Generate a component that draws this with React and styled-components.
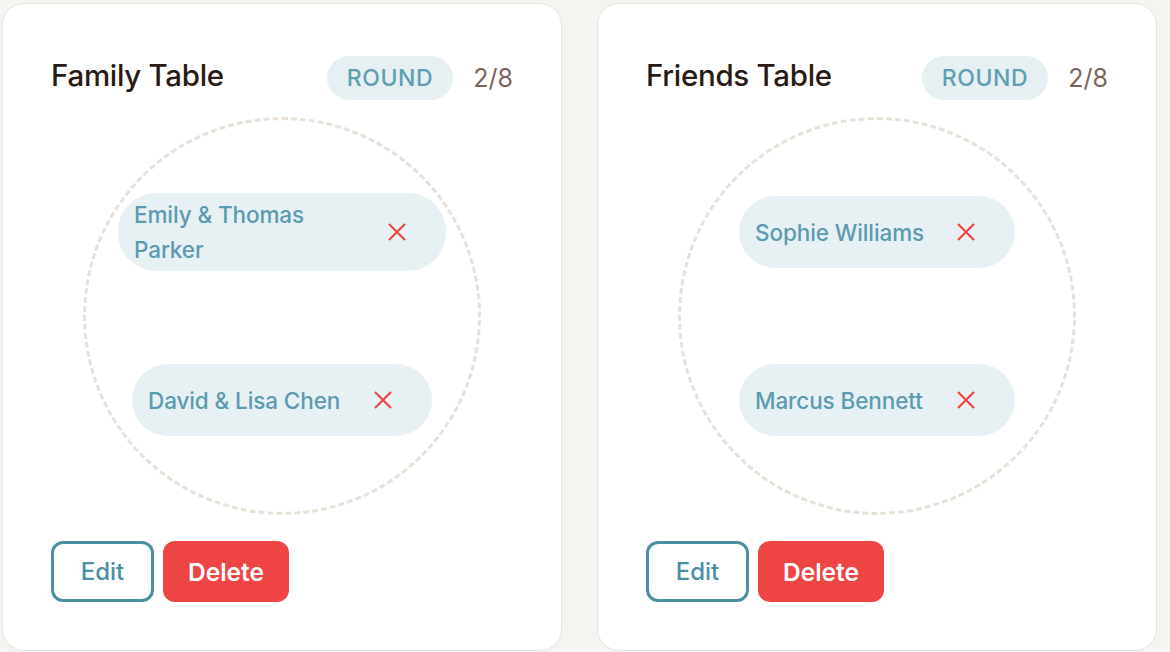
import React from "react";
import styled, { createGlobalStyle } from "styled-components";

const Global = createGlobalStyle`
  html, body { margin: 0; padding: 0; background: #f6f4f1; }
  body { font-family: "Inter", "Noto Sans", sans-serif; -webkit-font-smoothing: antialiased; }
  * { box-sizing: border-box; }
`;

const Page = styled.div`
  display: flex;
  gap: 35px;
  padding: 3px 0 0 2px;
  width: 1170px;
  height: 652px;
  overflow: hidden;
`;

const Card = styled.section`
  width: 560px;
  height: 648px;
  flex: none;
  background: #ffffff;
  border: 1.5px solid #e8e4de;
  border-radius: 22px;
  padding: 52px 48px 48px 48px;
  display: flex;
  flex-direction: column;
`;

const Header = styled.div`
  display: flex;
  align-items: center;
  height: 44px;
`;

const Title = styled.h2`
  margin: 0;
  flex: 1;
  font-size: 29.5px;
  font-weight: 500;
  color: #2a1a14;
  letter-spacing: -0.3px;
  position: relative;
  top: -3px;
`;

const Badge = styled.span`
  height: 44px;
  padding: 0 20px;
  border-radius: 22px;
  background: #e6f0f3;
  color: #5f9fb0;
  font-size: 23px;
  font-weight: 500;
  letter-spacing: 0.6px;
  display: inline-flex;
  align-items: center;
`;

const Count = styled.span`
  margin-left: 20px;
  font-size: 25px;
  color: #7b6559;
`;

const TableArea = styled.div`
  margin-top: 17px;
  display: flex;
  justify-content: center;
`;

const Circle = styled.div`
  position: relative;
  width: 398px;
  height: 398px;
  border-radius: 50%;
  border: 3px dashed #e7e1d8;
`;

const Seat = styled.div`
  position: absolute;
  left: 50%;
  top: calc(50% + ${(p) => p.$dy}px);
  transform: translate(-50%, -50%);
  width: ${(p) => p.$w}px;
  min-height: 72px;
  padding: 4px 0 4px 16px;
  border-radius: 38px;
  background: #e7f0f3;
  display: flex;
  align-items: center;
  gap: 20px;
`;

const SeatName = styled.span`
  flex: 1;
  font-size: 22.5px;
  font-weight: 500;
  line-height: 35px;
  color: #5b9bb0;
  letter-spacing: -0.1px;
`;

const Remove = styled.button`
  flex: none;
  width: 30px;
  height: 30px;
  margin-right: 34px;
  border: none;
  background: transparent;
  padding: 0;
  display: flex;
  align-items: center;
  justify-content: center;
  cursor: pointer;
`;

const Actions = styled.div`
  margin-top: 26px;
  display: flex;
  gap: 9px;
`;

const EditButton = styled.button`
  height: 61px;
  width: 103px;
  border: 3px solid #4b8fa3;
  border-radius: 12px;
  background: #fff;
  color: #4b8fa3;
  font-family: inherit;
  font-size: 24px;
  font-weight: 500;
`;

const DeleteButton = styled.button`
  height: 61px;
  width: 126px;
  border: none;
  border-radius: 12px;
  background: #ef4444;
  color: #fff;
  font-family: inherit;
  font-size: 24.5px;
  font-weight: 600;
`;

const XIcon = () => (
  <svg width="20" height="20" viewBox="0 0 20 20" fill="none">
    <path d="M2 2 L18 18 M18 2 L2 18" stroke="#ef4444" strokeWidth="2.2" strokeLinecap="butt" />
  </svg>
);

const tables = [
  {
    name: "Family Table",
    seats: [
      { name: "Emily & Thomas Parker", dy: -84, w: 328 },
      { name: "David & Lisa Chen", dy: 84, w: 300 },
    ],
  },
  {
    name: "Friends Table",
    seats: [
      { name: "Sophie Williams", dy: -84, w: 276 },
      { name: "Marcus Bennett", dy: 84, w: 276 },
    ],
  },
];

export default function App() {
  return (
    <>
      <Global />
      <Page>
        {tables.map((t) => (
          <Card key={t.name}>
            <Header>
              <Title>{t.name}</Title>
              <Badge>ROUND</Badge>
              <Count>2/8</Count>
            </Header>
            <TableArea>
              <Circle>
                {t.seats.map((s) => (
                  <Seat key={s.name} $dy={s.dy} $w={s.w}>
                    <SeatName>{s.name}</SeatName>
                    <Remove aria-label="Remove">
                      <XIcon />
                    </Remove>
                  </Seat>
                ))}
              </Circle>
            </TableArea>
            <Actions>
              <EditButton>Edit</EditButton>
              <DeleteButton>Delete</DeleteButton>
            </Actions>
          </Card>
        ))}
      </Page>
    </>
  );
}
